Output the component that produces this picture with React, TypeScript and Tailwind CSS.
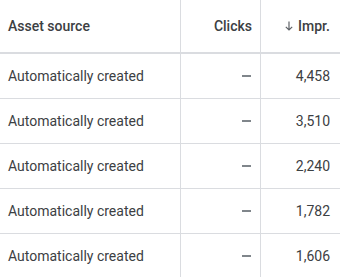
import React from "react";

const rows = [
  { source: "Automatically created", impr: "4,458" },
  { source: "Automatically created", impr: "3,510" },
  { source: "Automatically created", impr: "2,240" },
  { source: "Automatically created", impr: "1,782" },
  { source: "Automatically created", impr: "1,606" },
];

const ArrowDown = () => (
  <svg width="8" height="10" viewBox="0 0 8 10" fill="none" className="shrink-0">
    <path d="M4 0.5V9M0.8 5.8L4 9L7.2 5.8" stroke="#5f6368" strokeWidth="1.2" />
  </svg>
);

const App: React.FC = () => {
  return (
    <div className="w-[340px] h-[277px] overflow-hidden bg-white font-['Roboto',sans-serif] text-[14px]">
      <div className="grid grid-cols-[181px_80px_79px]">
        <div className="h-[54px] flex items-center pl-2 border-r border-b-2 border-[#dadce0] font-medium text-[#3c4043]">
          Asset source
        </div>
        <div className="h-[54px] flex items-center justify-end pr-2 border-r border-b-2 border-[#dadce0] font-medium text-[#3c4043]">
          Clicks
        </div>
        <div className="h-[54px] flex items-center justify-end gap-[5px] pr-[10px] border-b-2 border-[#dadce0] font-medium text-[#3c4043]">
          <ArrowDown />
          <span>Impr.</span>
        </div>

        {rows.map((row, i) => (
          <React.Fragment key={i}>
            <div className="h-[45px] flex items-center pl-2 border-r border-b border-[#dadce0] text-[#3c4043]">
              {row.source}
            </div>
            <div className="h-[45px] flex items-center justify-end pr-[9px] border-r border-b border-[#dadce0]">
              <span className="block w-[9px] h-[2px] bg-[#80868b]" />
            </div>
            <div className="h-[45px] flex items-center justify-end pr-[10px] border-b border-[#dadce0] text-[#3c4043]">
              {row.impr}
            </div>
          </React.Fragment>
        ))}
      </div>
    </div>
  );
};

export default App;
